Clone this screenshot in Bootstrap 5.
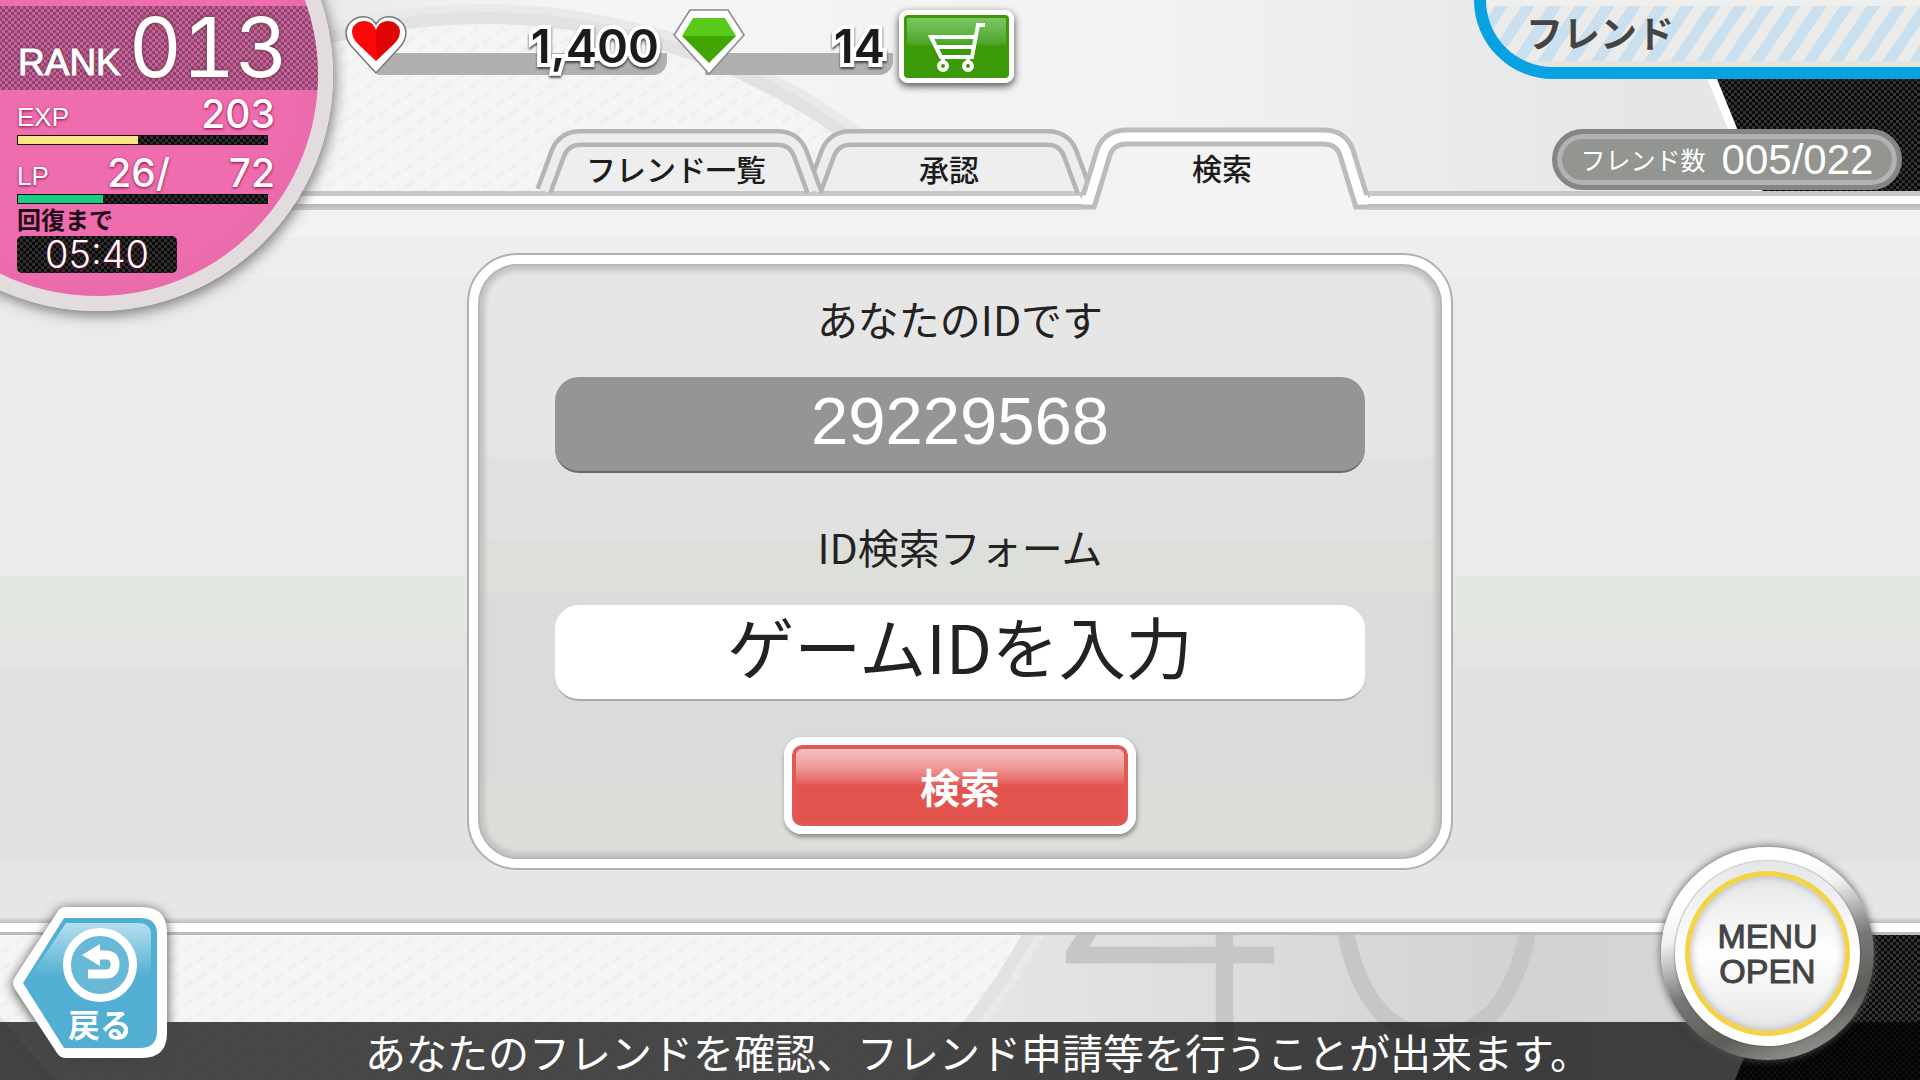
<!DOCTYPE html>
<html lang="ja">
<head>
<meta charset="utf-8">
<meta name="viewport" content="width=device-width, initial-scale=1">
<title>フレンド検索</title>
<link href="https://cdn.jsdelivr.net/npm/bootstrap@5.3.0/dist/css/bootstrap.min.css" rel="stylesheet">
<script src="https://cdn.jsdelivr.net/npm/bootstrap@5.3.0/dist/js/bootstrap.bundle.min.js" defer></script>
<style>
  :root {
    --jp: "Noto Sans CJK JP", sans-serif;
    --num: Inter, "Noto Sans CJK JP", sans-serif;
    --mesh: repeating-conic-gradient(#0b0b0b 0 25%, #2e2e2e 0 50%) 0 0 / 6px 6px;
  }
  body { font-family: var(--jp); color: #222; background: #ececec; }
  .backdrop { z-index: -1; }

  /* header */
  .top-row { height: 127px; padding-left: 345px; }
  .purse { height: 75px; padding-right: 8px; margin-right: 6px;
    background: linear-gradient(#b0b0af, #b0b0af) 32px 100% / 100% 22px no-repeat; border-radius: 0 0 14px 0; }
  .purse-long { width: 322px; }
  .purse-short { width: 220px; }
  .purse-value { font: 600 47px/60px var(--num); color: #1b1b1b; paint-order: stroke fill;
    -webkit-text-stroke: 8px #fff; filter: drop-shadow(0 2px 1px #444); }
  .shop { width: 115px; height: 73px; margin-top: 10px; border: 5px solid #fff; border-radius: 9px;
    background: linear-gradient(#83c96a, #4da72b 45%, #3b9a08 50%, #3b9a08); box-shadow: 0 3px 7px 1px #666, inset 0 0 0 3px #3b9a08; }
  .screen-title { width: 446px; height: 79px; padding: 0 0 2px 40px; border: solid #08a2e2; border-width: 0 0 12px 12px;
    border-bottom-left-radius: 80px; font-size: 37px; color: #444; background:
      linear-gradient(#efefed, #efefed) 0 0 / 100% 6px no-repeat,
      linear-gradient(#e4e4e2, #e4e4e2) 0 100% / 100% 6px no-repeat,
      repeating-linear-gradient(124deg, #ebebe9 0 11px, #cbe0ef 11px 22px); }

  .rank-disc { top: -161px; left: -139px; width: 472px; height: 472px; border: 15px solid #e3dcdf; border-radius: 50%;
    background: radial-gradient(circle, #ef6daf 60%, #d8649d 100%); box-shadow: 2px 4px 14px #777; padding-top: 152px; z-index: 3;
    color: #fff; font-family: var(--num); }
  .disc-band { height: 84px; padding-left: 142px;
    background: repeating-conic-gradient(#8f4570 0 25%, #c8639a 0 50%) 0 0 / 6px 6px; text-shadow: 0 0 4px #633; }
  .rank-word { font: 37px/46px "Liberation Sans", sans-serif; -webkit-text-stroke: 1px #fff; }
  .rank-num { font-size: 82px; line-height: 84px; font-weight: 400; font-feature-settings: "tnum"; }
  .disc-stats { width: 258px; margin-left: 141px; text-shadow: 0 1px 3px #803; }
  .stat-line { height: 45px; font-size: 39px; line-height: 42px; font-weight: 500; }
  .stat-line small { font: 26px/36px "Liberation Sans", sans-serif; }
  .gauge { width: 251px; height: 10px; border: 1px solid #111; border-radius: 0; background: var(--mesh); }
  .gauge-exp { background: #fbe582; }
  .gauge-lp { background: #16cf83; }
  .recover { height: 32px; font: 700 24px/30px var(--jp); color: #200a16; text-shadow: none; }
  .timer { width: 160px; height: 37px; border-radius: 5px; background: var(--mesh); font-size: 38px; font-weight: 300; line-height: 37px; }

  /* tabs */
  .tab-row { height: 64px; padding-right: 18px; margin-left: 536px; z-index: 2; }
  .tab-btn { width: 286px; height: 62px; padding: 15px 6px 0 0; font-size: 30px; font-weight: 500; line-height: 42px; color: #1c1c1c; border: 0; background: none; }
  .tab-btn svg { inset: 0; width: 100%; z-index: -1; overflow: visible; }
  .tab-first { z-index: 2; }
  .tab-mid { margin-left: -16px; padding-right: 0; z-index: 1; }
  .tab-on { margin-left: -10px; z-index: 3; height: 64px; }
  .count-pill { height: 61px; width: 350px; border: 5px solid #858585; border-radius: 31px; background: #929590; box-shadow: inset 0 0 0 5px #b2b2b2; color: #fff; margin-top: 2px; }
  .count-pill span { font-size: 25px; }
  .count-pill strong { font: 42px/46px "Liberation Sans", sans-serif; }

  /* panel */
  .rail-top { height: 19px; background: linear-gradient(#c8c8c8 0 5px, #fff 5px 13px, #b9b9b8 13px, #cbcbca 19px); }
  .rail-low { height: 17px; background: linear-gradient(#dcdcdc, #bdbdbd 5px, #fff 5px 14px, #bcbcbc 14px 17px); }
  .stage { padding-bottom: 5px; background: linear-gradient(#f2f2f4 4%, #eeeeee 4% 9.6%, #ebebed 9.6% 51.7%, #e3e8e1 51.7% 59.5%, #e4e5e3 59.5% 65%, #e1e1e4 65% 92%, #e6e6e6 92%); }
  .frame { width: 51.4%; border: 2px solid #b0b0b0; border-radius: 50px; padding: 9px; background: #fff; }
  .frame-in { border-radius: 40px; padding: 27px 77px 25px; box-shadow: inset 0 0 0 2px #b8b8b8, inset 0 0 5px 7px #c4c4c4;
    background: linear-gradient(#e6e6e6 32%, #e1e1e3 33% 46%, #dddfda 47% 55%, #dbdbdb 56% 70%, #dbdbdb 86%, #dcdfd9 87%); }
  .caption { font-size: 41px; line-height: 54px; }
  .field { height: 96px; border-radius: 24px; border: 0; border-bottom: 2px solid #aaa; text-align: center; padding: 0 0 14px; }
  .field-id { background: #959595; border-color: #6a6a6a; color: #fff; font: 67px/88px "Liberation Sans", sans-serif; margin: 32px 0 46px; }
  .field-in { background: #fff; color: #222; font-size: 67px; margin: 32px 0 36px; }
  .field-in::placeholder { color: #222; opacity: 1; }
  .go { width: 352px; height: 97px; border: 8px solid #fff; border-radius: 18px; color: #fff; font-size: 40px; font-weight: 700; line-height: 76px; padding: 0;
    background: linear-gradient(#f7c6c6, #f0a09e 25%, #e4605d 48%, #e4544f 50%); box-shadow: 1px 3px 5px #888, inset 0 0 0 4px #dd5a58; }

  /* bottom */
  .under { height: 87px; }
  .hint { height: 58px; padding-left: 36px; background: rgba(0, 0, 0, .71); color: #fff; font-size: 41px; line-height: 58px; }
  .back { left: 12px; bottom: 21px; width: 156px; height: 152px; filter: drop-shadow(0 2px 6px #444); z-index: 4; }
  .back span { left: 0; right: 0; bottom: 14px; padding-left: 20px; font-size: 32px; font-weight: 700; line-height: 44px; color: #fff; }
  .menu-btn { right: 46px; bottom: 20px; width: 213px; height: 213px; border-radius: 50%; z-index: 4; padding: 14px;
    background: linear-gradient(160deg, #fff 22%, #f1f1f1 34%, #777 55%, #5c5c58 75%, #b5b5b2 100%); box-shadow: 0 0 8px #555; }
  .menu-face { border-radius: 50%; background: linear-gradient(#e4e6e8, #fff 50%); padding: 10px; box-shadow: 0 0 2px #444; }
  .menu-ring { border-radius: 50%; border: 5px solid #f4d444; background: linear-gradient(#e6e6e8, #fff 50%, #e6e6e8); box-shadow: inset 0 0 8px #aaa;
    color: #444; font: 34px/35px "Liberation Sans", sans-serif; -webkit-text-stroke: 1px #444; }
</style>
</head>
<body class="vh-100 overflow-hidden d-flex flex-column position-relative">

<svg class="backdrop position-absolute top-0 start-0 w-100 h-100" viewBox="0 0 1920 1080" preserveAspectRatio="none" aria-hidden="true">
  <defs>
    <linearGradient id="light" x1="0" y1="0" x2="1" y2="0"><stop offset="0" stop-color="#dcdcdc"/><stop offset=".3" stop-color="#f5f5f5"/><stop offset=".6" stop-color="#f2f2f2"/><stop offset=".85" stop-color="#e6e6e6"/></linearGradient>
    <linearGradient id="low" x1="0" y1="0" x2="1" y2="0"><stop offset=".5" stop-color="#e6e6e6"/><stop offset=".8" stop-color="#d2d2d2"/><stop offset="1" stop-color="#dedede"/></linearGradient>
    <pattern id="mesh" width="6" height="6" patternUnits="userSpaceOnUse"><rect width="6" height="6" fill="#080808"/><rect width="3" height="3" fill="#333"/><rect x="3" y="3" width="3" height="3" fill="#333"/></pattern>
    <pattern id="weave" width="26" height="18" patternUnits="userSpaceOnUse"><rect width="26" height="18" fill="#f5f5f3"/><path d="M2 16l8-7M15 8l8-7" stroke="#f0f0ee" stroke-width="4"/></pattern>
  </defs>
  <rect width="1920" height="600" fill="url(#light)"/>
  <rect y="600" width="1920" height="480" fill="url(#low)"/>
  <circle cx="484" cy="638" r="634" fill="#e9e9e9"/>
  <circle cx="484" cy="638" r="626" fill="#e2e2e2"/>
  <circle cx="484" cy="638" r="614" fill="url(#weave)"/>
  <path d="M1675 0L1757 200H1920V0z" fill="#fff"/>
  <path d="M1685 0L1766 200H1920V0z" fill="url(#mesh)"/>
  <path d="M1735 1080L1800 920H1920V1080z" fill="url(#mesh)"/>
  <text x="1036" y="1037" font-family="Inter" font-weight="100" font-size="450" fill="#c6c6c6" stroke="#c6c6c6" stroke-width="7">40</text>
</svg>

<header>
  <section class="rank-disc position-absolute overflow-hidden" aria-label="プレイヤー情報">
    <div class="disc-band d-flex align-items-end">
      <span class="rank-word pb-1">RANK</span><span class="rank-num ms-2">013</span>
    </div>
    <div class="disc-stats">
      <div class="stat-line d-flex align-items-end justify-content-between"><small>EXP</small><span>203</span></div>
      <div class="gauge progress"><div class="gauge-exp" style="width:48%"></div></div>
      <div class="stat-line d-flex align-items-end justify-content-between mt-1"><small>LP</small><span>26/</span><span>72</span></div>
      <div class="gauge progress"><div class="gauge-lp" style="width:34%"></div></div>
      <div class="recover">回復まで</div>
      <div class="timer text-center">05:40</div>
    </div>
  </section>

  <div class="top-row d-flex align-items-start">
    <div class="purse purse-long d-flex align-items-end justify-content-between">
      <svg width="62" height="60" viewBox="0 0 62 60" role="img" aria-label="ハート"><path d="M31 58L8 33C3 28 1 23 1 17C2 3 22-5 31 9C40-5 60 3 61 17C61 23 59 28 54 33z" fill="#fff" stroke="#777" stroke-width="1.5"/><path d="M31 46L13 29C9 25 7 21 7 16C8 5 26 1 31 15z" fill="#fb0707"/><path d="M31 46L49 29C53 25 55 21 55 16C54 5 36 1 31 15z" fill="#e00505"/></svg>
      <span class="purse-value align-self-start mt-3">1,400</span>
    </div>
    <div class="purse purse-short d-flex align-items-end justify-content-between">
      <svg width="72" height="66" viewBox="0 0 72 66" role="img" aria-label="ジェム"><path d="M17 1H55L71 26L36 65L1 26z" fill="#fff" stroke="#888" stroke-width="1.5"/><path d="M20 9H52L63 27H9z" fill="#59ca19"/><path d="M9 27H63L36 54z" fill="#3fa603"/></svg>
      <span class="purse-value align-self-start mt-3">14</span>
    </div>
    <button class="shop p-0 d-flex align-items-center justify-content-center" aria-label="ショップ">
      <svg width="62" height="52" viewBox="0 0 62 52" fill="none" stroke="#fff" stroke-width="4"><path d="M59 4H52L46 36H15L5 16H49M11 26H47"/><path d="M17 36v5M42 36v5"/><circle cx="17" cy="45" r="4"/><circle cx="42" cy="45" r="4"/></svg>
    </button>
    <h1 class="screen-title ms-auto mb-0 fw-bold d-flex align-items-center">フレンド</h1>
  </div>

  <div class="tab-row d-flex align-items-end position-relative">
    <nav class="d-flex align-items-end" aria-label="フレンドメニュー">
      <button class="tab-btn tab-first position-relative"><svg class="position-absolute" viewBox="0 0 286 62" height="62" preserveAspectRatio="none" fill="none"><g id="tabshape"><path d="M8 62L22 24Q28 9 45 9H241Q258 9 264 24L278 62z" fill="#eee"/><path d="M8 62L22 24Q28 9 45 9H241Q258 9 264 24L278 62" stroke="#b4b4b3" stroke-width="18"/><path d="M8 62L22 24Q28 9 45 9H241Q258 9 264 24L278 62" stroke="#ededeb" stroke-width="9"/></g></svg>フレンド一覧</button>
      <button class="tab-btn tab-mid position-relative"><svg class="position-absolute" viewBox="0 0 286 62" height="62" preserveAspectRatio="none" fill="none"><use href="#tabshape"/></svg>承認</button>
      <button class="tab-btn tab-on position-relative" aria-current="page"><svg class="position-absolute" viewBox="0 0 286 83" height="83" preserveAspectRatio="none" fill="none"><path d="M0 83V74H7L22 24Q28 10 45 10H241Q258 10 264 24L279 74H286V83z" fill="#f3f3f4"/><path d="M0 73H7L22 24Q28 10 45 10H241Q258 10 264 24L279 73H286" stroke="#bcbcbb" stroke-width="19"/><path d="M0 73H7L22 24Q28 10 45 10H241Q258 10 264 24L279 73H286" stroke="#fff" stroke-width="9"/></svg>検索</button>
    </nav>
    <div class="count-pill ms-auto align-self-start d-flex align-items-center justify-content-center gap-3"><span>フレンド数</span><strong>005/022</strong></div>
  </div>
</header>

<div class="rail-top"></div>
<main class="stage flex-grow-1 d-flex align-items-center justify-content-center">
  <form class="frame" onsubmit="return false">
    <div class="frame-in d-flex flex-column align-items-stretch">
      <label class="caption text-center" for="own">あなたのIDです</label>
      <output class="field field-id d-block" id="own">29229568</output>
      <label class="caption text-center" for="gid">ID検索フォーム</label>
      <input class="field field-in w-100" id="gid" type="text" placeholder="ゲームIDを入力">
      <button class="go align-self-center" type="submit">検索</button>
    </div>
  </form>
</main>
<div class="rail-low"></div>
<div class="under"></div>
<footer class="hint text-center">あなたのフレンドを確認、フレンド申請等を行うことが出来ます。</footer>

<a class="back position-absolute text-decoration-none text-center" href="#">
  <svg width="156" height="152" viewBox="0 0 156 152" aria-hidden="true">
    <defs><linearGradient id="sky" x1="0" y1="0" x2="0" y2="1"><stop offset="0" stop-color="#b5dfee"/><stop offset="1" stop-color="#52aed2"/></linearGradient></defs>
    <path d="M46 4Q49 0 54 0H130Q155 0 155 26V126Q155 151 130 151H54Q48 151 45 146L3 82Q-1 76 3 70z" fill="#fff"/>
    <path d="M52 11H128Q145 11 145 27V124Q145 141 128 141H52L11 76z" fill="#52aed2"/>
    <path d="M54 16H126Q139 16 139 28V70H18z" fill="url(#sky)"/>
    <circle cx="88" cy="58" r="33" fill="#68b9d8" stroke="#fff" stroke-width="8"/>
    <path d="M84 48H94Q103 48 103 57Q103 67 94 67H76" fill="none" stroke="#fff" stroke-width="9"/><path d="M70 48L88 37V59z" fill="#fff"/>
  </svg>
  <span class="position-absolute">戻る</span>
</a>
<button class="menu-btn position-absolute border-0">
  <span class="menu-face d-block h-100"><span class="menu-ring d-flex flex-column align-items-center justify-content-center h-100"><span>MENU</span><span>OPEN</span></span></span>
</button>
</body>
</html>
